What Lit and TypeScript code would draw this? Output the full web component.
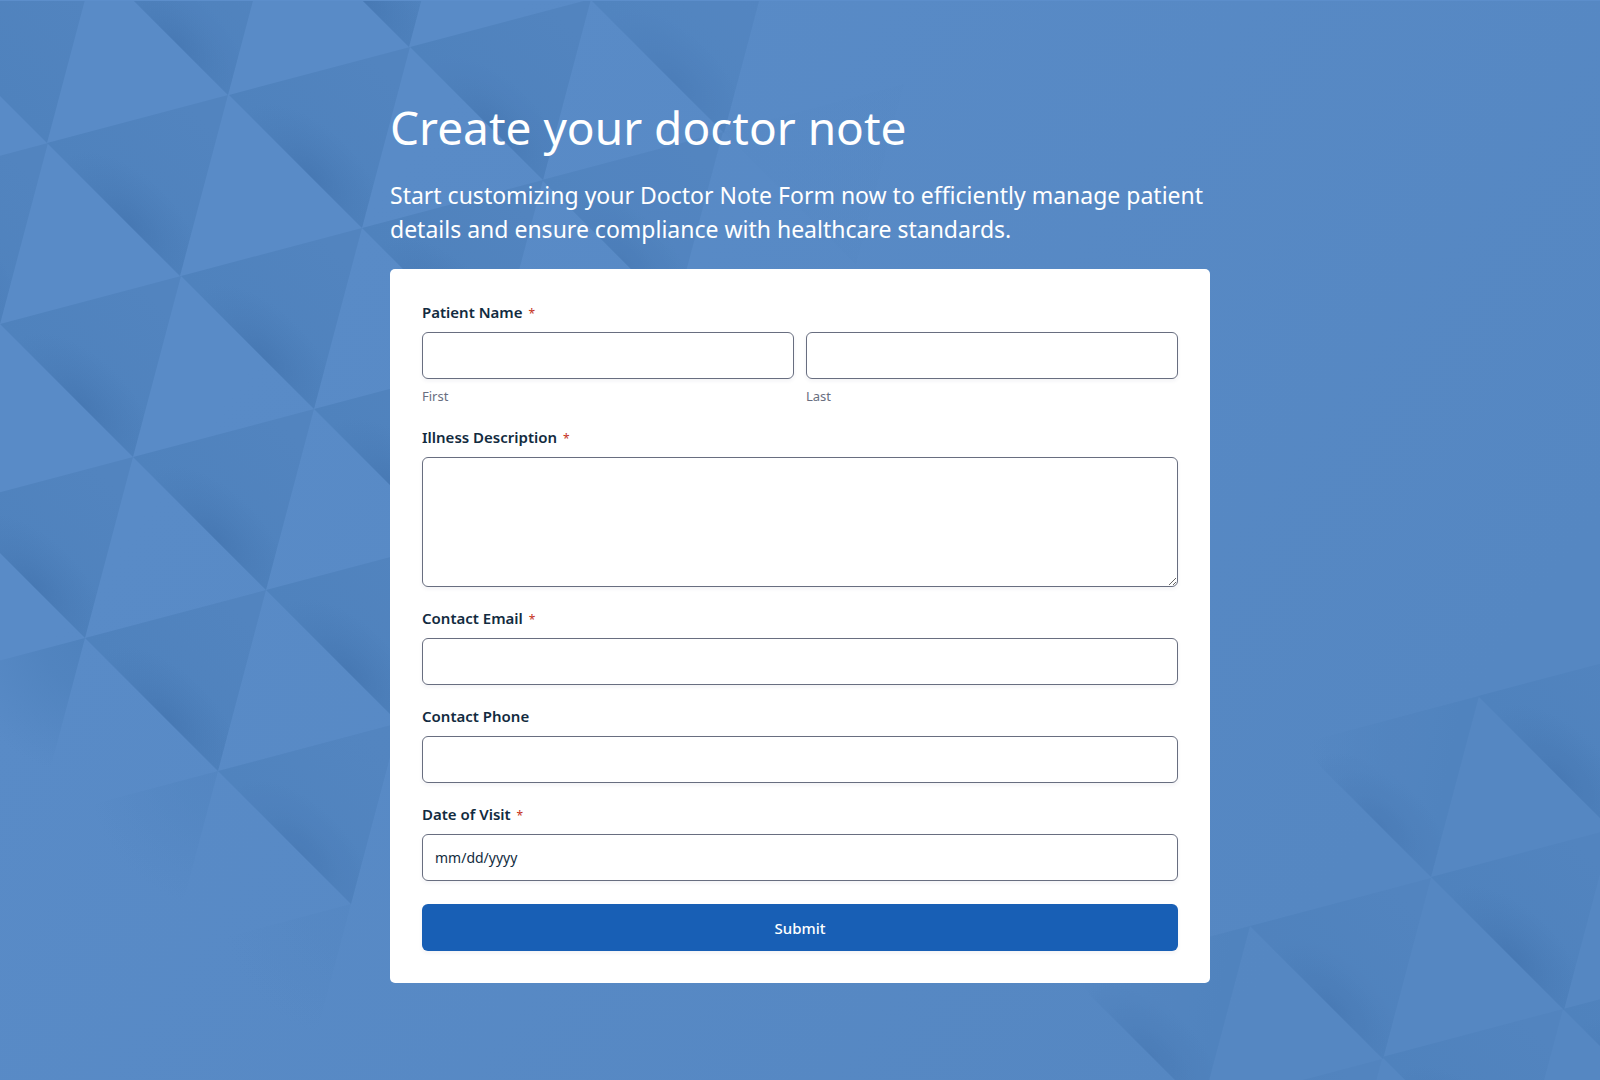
import { LitElement, html, svg, css } from "lit";
import { customElement } from "lit/decorators.js";

interface Facet {
  x: number;
  y: number;
  opacity: number;
  kind: "deep" | "soft" | "fade" | "dim";
}

const f = (x: number, y: number, opacity = 1, kind: Facet["kind"] = "deep"): Facet => ({ x, y, opacity, kind });

const FILLS = { deep: "url(#base)", soft: "url(#base)", fade: "url(#fade)", dim: "url(#dim)" };

// Top-left corner of every shaded facet in the triangular lattice.
const FACETS: Facet[] = [
  f(-86, 10, 1, "soft"), f(95, -38, 0.9), f(276, -86),
  f(-133, 191, 0.9), f(47, 143), f(229, 95), f(410, 47, 0.9), f(591, 0, 0.7),
  f(0, 324), f(181, 276), f(362, 228), f(542, 180, 0.75), f(723, 132, 0.1, "soft"),
  f(-48, 505), f(133, 457), f(314, 409),
  f(-96, 686, 0.9, "fade"), f(85, 638, 0.95), f(266, 590, 0.95),
  f(37, 819, 0.45, "fade"), f(218, 771, 0.8), f(170, 952, 0.25, "fade"),
  f(1298, 744, 0.75, "dim"), f(1478, 696, 0.9),
  f(1069, 974, 0.75, "dim"), f(1250, 926, 0.8), f(1431, 877),
  f(1201, 1107), f(1382, 1057, 0.95), f(1563, 1009),
];

@customElement("facet-backdrop")
class FacetBackdrop extends LitElement {
  static styles = css`
    :host { display: block; }
    .art { display: block; width: 100%; height: 100%; }
  `;

  private facet(t: Facet) {
    const shape = "M0 0L181-48L133 133Z";
    const shaded = t.kind === "deep" || t.kind === "dim";
    return svg`<g transform="translate(${t.x} ${t.y})" opacity=${t.opacity}>
      <path d=${shape} fill=${FILLS[t.kind]}></path>
      ${shaded ? svg`<path d=${shape} fill="url(#shade)"></path>` : ""}
    </g>`;
  }

  render() {
    return html`<svg class="art" viewBox="0 0 1600 1080" preserveAspectRatio="xMidYMid slice" aria-hidden="true">
      <defs>
        <linearGradient id="sky" gradientUnits="userSpaceOnUse" x1="300" y1="300" x2="1250" y2="1000">
          <stop offset="0" stop-color="#598bc7"></stop>
          <stop offset="1" stop-color="#5587c2"></stop>
        </linearGradient>
        <linearGradient id="base" gradientUnits="userSpaceOnUse" x1="66" y1="66" x2="157" y2="-24">
          <stop offset="0" stop-color="#4f82bd"></stop>
          <stop offset="1" stop-color="#5284bf"></stop>
        </linearGradient>
        <radialGradient id="shade" gradientUnits="userSpaceOnUse" cx="0" cy="0" r="1"
          gradientTransform="translate(82 82) rotate(45) scale(92 48)">
          <stop offset="0" stop-color="#4475b0" stop-opacity="0.75"></stop>
          <stop offset="0.5" stop-color="#4475b0" stop-opacity="0.32"></stop>
          <stop offset="1" stop-color="#4475b0" stop-opacity="0"></stop>
        </radialGradient>
        <radialGradient id="fade" gradientUnits="userSpaceOnUse" cx="186" cy="-46" r="135">
          <stop offset="0" stop-color="#4e81bc"></stop>
          <stop offset="0.35" stop-color="#4e81bc" stop-opacity="0.8"></stop>
          <stop offset="1" stop-color="#4e81bc" stop-opacity="0"></stop>
        </radialGradient>
        <linearGradient id="dim" gradientUnits="userSpaceOnUse" x1="10" y1="0" x2="150" y2="30">
          <stop offset="0" stop-color="#4f82bd" stop-opacity="0"></stop>
          <stop offset="1" stop-color="#4f82bd"></stop>
        </linearGradient>
      </defs>
      <rect width="1600" height="1080" fill="url(#sky)"></rect>
      ${FACETS.map((t) => this.facet(t))}
      <rect width="1600" height="1" fill="#5c8ecb"></rect>
    </svg>`;
  }
}

@customElement("app-root")
export class AppRoot extends LitElement {
  static styles = css`
    :host {
      display: block;
      font-family: "Noto Sans", "Open Sans", sans-serif;
      color: #122b40;
    }
    * { box-sizing: border-box; }
    .page {
      position: relative;
      min-height: 100vh;
      padding: 96px 24px;
      overflow: hidden;
      background: #588ac5;
    }
    .backdrop { position: absolute; inset: 0; }
    .content { position: relative; max-width: 820px; margin: 0 auto; }
    .title {
      margin: 0;
      font-size: 46px;
      line-height: 62px;
      font-weight: 400;
      color: #fff;
    }
    .lead {
      margin: 20px 0 23px;
      font-size: 23px;
      line-height: 34px;
      color: #fff;
    }
    .card {
      display: flex;
      flex-direction: column;
      gap: 20px;
      padding: 32px;
      border-radius: 5px;
      background: #fff;
    }
    .field { margin: 0; padding: 0; border: 0; min-width: 0; }
    .label {
      display: block;
      margin: 0 0 8px;
      padding: 0;
      font-size: 15px;
      line-height: 23px;
      font-weight: 600;
    }
    .star { margin-left: 2px; color: #c5301a; font-size: 12px; line-height: 1; font-weight: 400; }
    .pair { display: grid; grid-template-columns: 1fr 1fr; gap: 12px; }
    .control {
      display: block;
      width: 100%;
      height: 47px;
      padding: 0 12px;
      border: 1px solid #686e80;
      border-radius: 6px;
      background: #fff;
      box-shadow: 0 2px 4px rgba(30, 30, 80, 0.06);
      font-family: inherit;
      font-size: 14px;
      color: #122b40;
    }
    .control::placeholder { color: #122b40; opacity: 1; }
    .area { height: 130px; padding: 12px; resize: vertical; }
    .hint {
      display: block;
      margin-top: 8px;
      font-size: 13px;
      line-height: 19px;
      color: #686e80;
    }
    .submit {
      height: 47px;
      margin-top: 3px;
      border: 0;
      border-radius: 6px;
      background: #185fb5;
      box-shadow: 0 2px 4px rgba(30, 30, 80, 0.06);
      font-family: inherit;
      font-size: 15px;
      font-weight: 500;
      color: #fff;
      cursor: pointer;
    }
  `;

  private star() {
    return html`<span class="star">*</span>`;
  }

  render() {
    return html`<main class="page">
      <facet-backdrop class="backdrop"></facet-backdrop>
      <div class="content">
        <h1 class="title">Create your doctor note</h1>
        <p class="lead">Start customizing your Doctor Note Form now to efficiently manage patient details and ensure compliance with healthcare standards.</p>
        <form class="card" @submit=${(e: Event) => e.preventDefault()}>
          <fieldset class="field">
            <legend class="label">Patient Name ${this.star()}</legend>
            <div class="pair">
              <div>
                <input class="control" id="first" type="text" required />
                <label class="hint" for="first">First</label>
              </div>
              <div>
                <input class="control" id="last" type="text" required />
                <label class="hint" for="last">Last</label>
              </div>
            </div>
          </fieldset>
          <div class="field">
            <label class="label" for="illness">Illness Description ${this.star()}</label>
            <textarea class="control area" id="illness" required></textarea>
          </div>
          <div class="field">
            <label class="label" for="email">Contact Email ${this.star()}</label>
            <input class="control" id="email" type="email" required />
          </div>
          <div class="field">
            <label class="label" for="phone">Contact Phone</label>
            <input class="control" id="phone" type="tel" />
          </div>
          <div class="field">
            <label class="label" for="visit">Date of Visit ${this.star()}</label>
            <input class="control" id="visit" type="text" placeholder="mm/dd/yyyy" required />
          </div>
          <button class="submit" type="submit">Submit</button>
        </form>
      </div>
    </main>`;
  }
}
